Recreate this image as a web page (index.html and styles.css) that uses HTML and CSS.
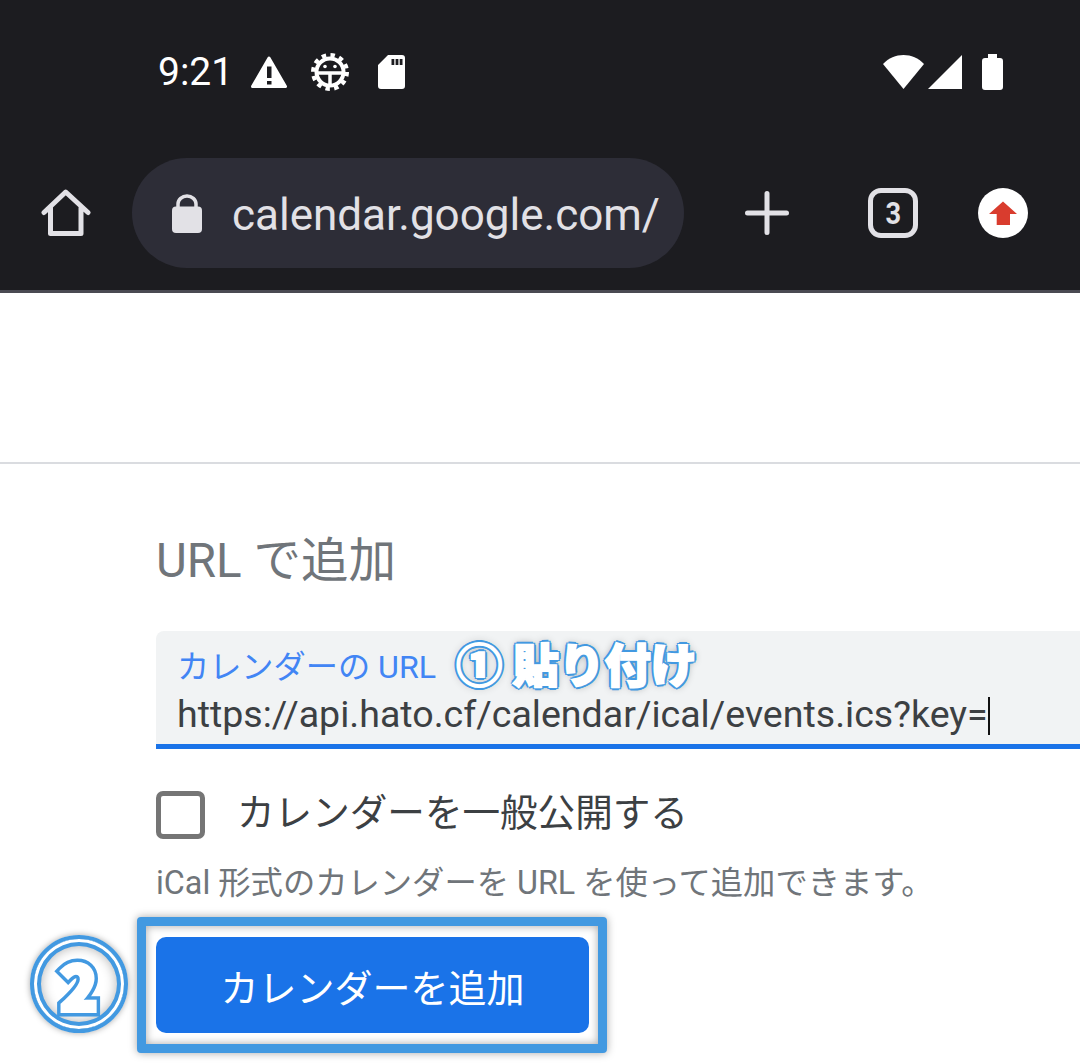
FILE: index.html
```html
<!DOCTYPE html>
<html lang="ja">
<head>
  <meta charset="UTF-8" />
  <title>URL で追加</title>
  <link rel="stylesheet" href="styles.css">
</head>
<body>
  <!-- Browser chrome -->
  <header class="chrome">
    <div class="status-row">
      <span class="time">9:21</span>
      <svg class="icon-warning" width="36" height="32" viewBox="0 0 36 32">
        <path fill="#fff" stroke="#fff" stroke-width="3" stroke-linejoin="round" d="M18 2L34.500 30.500H1.500Z" />
        <path fill="#1c1c20" d="M16 10.500H20.500V22H16Z M16 25H20.500V28.500H16Z" />
      </svg>
      <svg class="icon-gear" width="38" height="38" viewBox="0 0 38 38">
        <circle cx="19" cy="19" r="17" fill="none" stroke="#fff" stroke-width="4" stroke-dasharray="4.450 4.450" />
        <circle cx="19" cy="19" r="13.500" fill="none" stroke="#fff" stroke-width="4" />
        <path d="M5 20H33M19 20V33" stroke="#fff" stroke-width="3.500" />
        <circle cx="14" cy="13.500" r="1.800" fill="#fff" />
        <circle cx="24" cy="13.500" r="1.800" fill="#fff" />
      </svg>
      <svg class="icon-sd" width="27" height="34" viewBox="0 0 27 34">
        <path fill="#fff" fill-rule="evenodd" d="M10 0H24a3 3 0 0 1 3 3V31a3 3 0 0 1-3 3H3a3 3 0 0 1-3-3V10Z M13.500 4V10H16.300V4Z M17.600 4V10H20.400V4Z M21.700 4V10H24.500V4Z" />
      </svg>
      <div class="status-right">
        <svg width="41" height="34" viewBox="0 0 41 34"><path fill="#fff" d="M0 9C11-3 30-3 41 9L20.500 34Z" /></svg>
        <svg width="34" height="34" viewBox="0 0 34 34"><path fill="#fff" d="M34 0V34H0Z" /></svg>
        <svg class="icon-battery" width="21" height="36" viewBox="0 0 21 36">
          <path fill="#fff" d="M6 0H15V4H18a3 3 0 0 1 3 3V33a3 3 0 0 1-3 3H3a3 3 0 0 1-3-3V7a3 3 0 0 1 3-3H6Z" />
        </svg>
      </div>
    </div>
    <div class="toolbar">
      <svg class="tool-home" width="50" height="50" viewBox="0 0 50 50">
        <path d="M3 24.500L24.700 4L47 24.500M9.500 20V45.500H40V20" fill="none" stroke="#e2e1e6" stroke-width="5" stroke-linecap="round" stroke-linejoin="round" />
      </svg>
      <div class="omnibox">
        <svg width="30" height="39" viewBox="0 0 30 39">
          <path d="M6 15V10a9 8 0 0 1 18 0V15" fill="none" stroke="#e2e1e6" stroke-width="3.500" />
          <rect y="12.500" width="30" height="26.500" rx="4" fill="#e2e1e6" />
        </svg>
        <span class="omnibox-url">calendar.google.com/</span>
      </div>
      <svg class="tool-plus" width="44" height="44" viewBox="0 0 44 44">
        <path d="M22 2.500V41.500M2.500 22H41.500" stroke="#e2e1e6" stroke-width="5" stroke-linecap="round" />
      </svg>
      <div class="tab-count"><span class="tab-digit">3</span></div>
      <svg class="tool-update" width="50" height="50" viewBox="0 0 50 50">
        <circle cx="25" cy="25" r="25" fill="#fff" />
        <path fill="#d93c2e" d="M25 13.500L39 26H32V37H18.700V26H11Z" />
      </svg>
    </div>
  </header>

  <div class="page-top"></div>

  <main class="form">
    <h2 class="form-title">URL で追加</h2>

    <div class="url-field">
      <div class="url-label-row">
        <label class="url-label">カレンダーの URL</label>
        <span class="note note-one">① 貼り付け</span>
      </div>
      <div class="url-value">https://api.hato.cf/calendar/ical/events.ics?key=<span class="caret"></span></div>
    </div>

    <div class="check-row">
      <span class="checkbox"></span>
      <span class="check-label">カレンダーを一般公開する</span>
    </div>

    <p class="help">iCal 形式のカレンダーを URL を使って追加できます。</p>

    <div class="add-wrap">
      <!-- Step number over the left margin -->
      <div class="step-two"><span class="note step-digit">2</span></div>
      <div class="add-frame">
        <button class="add-button">カレンダーを追加</button>
      </div>
    </div>
  </main>
</body>
</html>
```

FILE: styles.css
```css
html, body {
  margin: 0;
  padding: 0;
  height: 1064px;
  overflow: hidden;
  background: white;
  font-family: Roboto, "Noto Sans CJK JP", sans-serif;
}

.chrome {
  height: 290px;
  background: #1c1c20;
  border-bottom: 3px solid #4a4a52;
}

.status-row {
  height: 144px;
  display: flex;
  align-items: center;
  padding-left: 158px;
  padding-right: 77px;
}

.time {
  width: 93px;
  font-size: 39px;
  color: white;
}

.icon-gear {
  margin-left: 24px;
}

.icon-sd {
  margin-left: 29px;
}

.status-right {
  margin-left: auto;
  display: flex;
  align-items: center;
  gap: 4px;
}

.icon-battery {
  margin-left: 16px;
}

.toolbar {
  height: 146px;
  box-sizing: border-box;
  padding: 14px 0 22px 41px;
  display: flex;
  align-items: center;
}

.omnibox {
  width: 552px;
  height: 110px;
  box-sizing: border-box;
  margin-left: 41px;
  padding-left: 40px;
  padding-right: 20px;
  border-radius: 55px;
  background: #2d2d37;
  display: flex;
  align-items: center;
  gap: 30px;
}

.omnibox-url {
  padding-top: 3px;
  font-size: 44px;
  color: #e2e1e6;
  white-space: nowrap;
}

.tool-plus {
  margin-left: 61px;
}

.tab-count {
  width: 50px;
  height: 50px;
  box-sizing: border-box;
  margin-left: 79px;
  border: 5px solid #e2e1e6;
  border-radius: 13px;
  color: #e2e1e6;
  font-size: 32px;
  font-weight: bold;
  line-height: 40px;
  text-align: center;
}

.tab-digit {
  display: inline-block;
  transform: scaleX(0.85);
}

.tool-update {
  margin-left: 60px;
}

.page-top {
  height: 169px;
  border-bottom: 2px solid #dadce0;
}

.form {
  padding-left: 156px;
  overflow: hidden;
}

.form-title {
  margin: 0;
  padding-top: 67px;
  font-size: 47.500px;
  line-height: 60px;
  font-weight: normal;
  color: #70757a;
}

.url-field {
  margin-top: 40px;
  margin-right: -12px;
  height: 118px;
  box-sizing: border-box;
  padding: 8px 0 0 21px;
  background: #f1f3f4;
  border-bottom: 5px solid #1a73e8;
  border-radius: 8px 8px 0 0;
}

.url-label-row {
  height: 50px;
  display: flex;
  align-items: center;
  gap: 20px;
}

.url-label {
  font-size: 32.200px;
  color: #4285f4;
}

/* hand-drawn style captions: white letters with a blue outline and soft glow */
.note {
  color: white;
  font-family: "Noto Sans CJK JP", sans-serif;
  font-weight: 900;
  -webkit-text-stroke: 2px white;
  text-shadow:
    3px 0 0 #4299e1, -3px 0 0 #4299e1, 0 3px 0 #4299e1, 0 -3px 0 #4299e1,
    2.200px 2.200px 0 #4299e1, -2.200px 2.200px 0 #4299e1, 2.200px -2.200px 0 #4299e1, -2.200px -2.200px 0 #4299e1,
    0 0 9px rgba(0, 0, 0, 0.45);
}

.note-one {
  padding-bottom: 4px;
  font-size: 46px;
  line-height: 46px;
  white-space: nowrap;
}

.url-value {
  font-size: 37.550px;
  line-height: 50px;
  color: #3c4043;
  white-space: nowrap;
}

.caret {
  display: inline-block;
  width: 2px;
  height: 38px;
  background: #111;
  vertical-align: -8px;
}

.check-row {
  margin-top: 42px;
  display: flex;
  align-items: center;
  gap: 32px;
}

.checkbox {
  width: 49px;
  height: 48px;
  box-sizing: border-box;
  border: 5px solid #757575;
  border-radius: 7px;
}

.check-label {
  padding-bottom: 4px;
  font-size: 37.600px;
  line-height: 44px;
  color: #3c4043;
}

.help {
  margin: 0;
  padding-top: 24px;
  font-size: 32.300px;
  line-height: 40px;
  color: #70757a;
  white-space: nowrap;
}

.add-wrap {
  position: relative;
  margin-top: 14px;
  margin-left: -156px;
  padding-left: 156px;
  padding-bottom: 12px;
}

.add-frame {
  width: 470px;
  height: 136px;
  box-sizing: border-box;
  margin-left: -19px;
  padding: 11px 10px;
  border: 9px solid #4299e1;
  border-radius: 4px;
  background: white;
  box-shadow: 0 0 8px rgba(0, 0, 0, 0.35), inset 0 0 8px rgba(0, 0, 0, 0.35);
}

.add-button {
  display: block;
  width: 433px;
  height: 96px;
  border: none;
  border-radius: 10px;
  background: #1a73e8;
  color: white;
  font-family: Roboto, "Noto Sans CJK JP", sans-serif;
  font-size: 38px;
}

.step-two {
  position: absolute;
  left: 30px;
  top: 18px;
  width: 98px;
  height: 98px;
  box-sizing: border-box;
  border: 4px solid #4299e1;
  border-radius: 50%;
  box-shadow: 0 0 6px rgba(0, 0, 0, 0.35), inset 0 0 0 3px white, inset 0 0 0 7px #4299e1, inset 0 0 12px 7px rgba(0, 0, 0, 0.3);
  display: flex;
  align-items: center;
  justify-content: center;
}

/* the digit sits on a blue copy of itself, so the white has to be drawn fat */
.step-digit {
  position: relative;
  font-size: 62px;
  font-weight: 900;
  line-height: 90px;
  -webkit-text-stroke: 0;
  text-shadow: none;
  color: #4299e1;
  -webkit-text-stroke: 11px #4299e1;
}

.step-digit::after {
  content: "2";
  position: absolute;
  left: 0;
  top: 0;
  color: white;
  -webkit-text-stroke: 4px white;
}
```
